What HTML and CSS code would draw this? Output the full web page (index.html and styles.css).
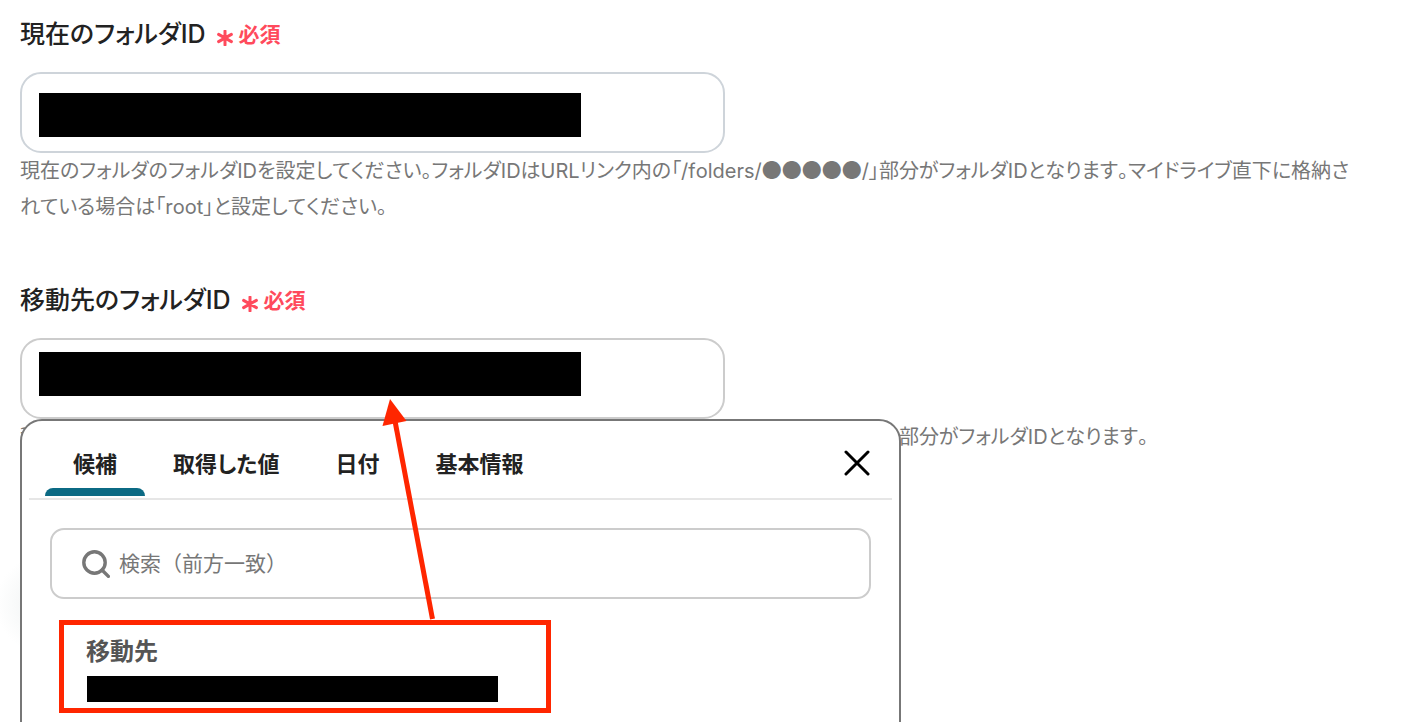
FILE: index.html
```html
<!DOCTYPE html>
<html lang="ja">
<head>
<meta charset="utf-8">
<meta name="viewport" content="width=device-width, initial-scale=1">
<title>フォルダID</title>
<link rel="stylesheet" href="styles.css">
</head>
<body>
<main class="page">
  <section class="field">
    <div class="field-head">
      <label class="field-label" for="current-folder">現在のフォルダID</label>
      <span class="required">
        <svg class="required-mark" viewBox="0 0 16 16" aria-hidden="true"><path d="M8 1v14M1.6 4.4l12.8 7.2M14.4 4.4L1.6 11.6"/></svg>
        必須
      </span>
    </div>
    <div class="control">
      <input class="text-box text-box-cool" id="current-folder" type="text">
      <span class="redaction redaction-middle"></span>
    </div>
    <p class="help">現在のフォルダのフォルダIDを設定してください。フォルダIDはURLリンク内の「/folders/<span class="dots">●●●●●</span>/」部分がフォルダIDとなります。マイドライブ直下に格納されている場合は「root」と設定してください。</p>
  </section>

  <section class="field">
    <div class="field-head">
      <label class="field-label" for="target-folder">移動先のフォルダID</label>
      <span class="required">
        <svg class="required-mark" viewBox="0 0 16 16" aria-hidden="true"><path d="M8 1v14M1.6 4.4l12.8 7.2M14.4 4.4L1.6 11.6"/></svg>
        必須
      </span>
    </div>
    <div class="control">
      <input class="text-box" id="target-folder" type="text">
      <span class="redaction redaction-upper"></span>
      <span class="glow"></span>
      <div class="panel">
        <div class="panel-head">
          <div class="tabs" role="tablist">
            <button class="tab tab-active" type="button" role="tab" aria-selected="true">候補</button>
            <button class="tab" type="button" role="tab" aria-selected="false">取得した値</button>
            <button class="tab" type="button" role="tab" aria-selected="false">日付</button>
            <button class="tab" type="button" role="tab" aria-selected="false">基本情報</button>
          </div>
          <button class="close" type="button" aria-label="閉じる">
            <svg class="close-icon" viewBox="0 0 26 26" aria-hidden="true"><path d="M2 2l22 22M24 2L2 24"/></svg>
          </button>
        </div>
        <div class="panel-body">
          <div class="search">
            <svg class="search-icon" viewBox="0 0 28 28" aria-hidden="true"><circle cx="12.5" cy="12.5" r="10.7"/><path d="M20 20l6.400 6.400"/></svg>
            <input class="search-input" type="text" aria-label="検索" placeholder="検索（前方一致）">
          </div>
          <div class="option-wrap">
            <button class="option" type="button" aria-label="移動先">
              <span class="option-title">移動先</span>
              <span class="option-value"></span>
            </button>
            <svg class="arrow" viewBox="0 0 60 221" aria-hidden="true"><path class="arrow-line" d="M51.500 220L14 22"/><path class="arrow-head" d="M9 0L25.500 22L1.500 27z"/></svg>
          </div>
        </div>
      </div>
    </div>
    <p class="help">移動先のフォルダのフォルダIDを設定してください。フォルダIDはURLリンク内の「/folders/<span class="dots">●●●●●</span>/」部分がフォルダIDとなります。</p>
  </section>
</main>
</body>
</html>
```

FILE: styles.css
```css
* { box-sizing: border-box; }

body {
  margin: 0;
  background: #fff;
  color: #222;
  font-family: Inter, "Noto Sans CJK JP", sans-serif;
}

button, input { font: inherit; color: inherit; }

.page {
  display: flex;
  flex-direction: column;
  gap: 57px;
  height: 100vh;
  padding: 16px 52px 0 20px;
  overflow: hidden;
}

.field-head {
  display: flex;
  align-items: center;
  gap: 11px;
  height: 36px;
  margin-bottom: 20px;
}

.field-label {
  font-size: 25px;
  line-height: 36px;
  font-weight: 500;
  font-kerning: none;
  font-feature-settings: "palt";
}

.required {
  display: flex;
  align-items: center;
  gap: 6px;
  padding-top: 2px;
  color: #ff4a5c;
  font-size: 21px;
  line-height: 36px;
  font-weight: 600;
}

.required-mark {
  width: 16px;
  height: 16px;
  margin-top: 5px;
  fill: none;
  stroke: currentColor;
  stroke-width: 3;
  stroke-linecap: round;
}

.control { position: relative; }

.text-box {
  display: block;
  width: 100%;
  max-width: 705px;
  height: 81px;
  padding: 0 18px;
  border: 2px solid #ccc;
  border-radius: 21px;
  background: #fff;
  outline: none;
}

.text-box-cool { border-color: #ced4da; }

.redaction {
  position: absolute;
  left: 19px;
  width: 542px;
  height: 44px;
  background: #000;
}

.redaction-middle { top: 21px; }
.redaction-upper { top: 14px; }

.help {
  margin: 0;
  color: #777;
  font-size: 20px;
  line-height: 36px;
  font-kerning: none;
  font-feature-settings: "palt";
}

.dots {
  font-family: "Noto Sans CJK JP", sans-serif;
  line-height: 1;
}

.glow {
  position: absolute;
  top: 216px;
  left: -24px;
  width: 100px;
  height: 100px;
  background: radial-gradient(closest-side, #eef1f1, #fff);
}

.panel {
  position: absolute;
  top: 81px;
  left: 0;
  z-index: 2;
  width: 881px;
  max-width: 100%;
  min-height: 400px;
  border: 2px solid #777;
  border-radius: 22px;
  background: #fff;
}

.panel-head {
  display: flex;
  align-items: center;
  justify-content: space-between;
  height: 79px;
  margin: 0 7px;
  padding: 8px 22px 2px 16px;
  border-bottom: 2px solid #e6e6e6;
}

.tabs { display: flex; align-self: stretch; }

.tab {
  position: relative;
  padding: 0 28px 2px;
  border: 0;
  background: none;
  font-size: 22px;
  font-weight: 600;
  font-feature-settings: "palt";
}

.tab-active::after {
  content: "";
  position: absolute;
  right: 0;
  bottom: 0;
  left: 0;
  height: 8px;
  border-radius: 8px 8px 0 0;
  background: #0b6a84;
}

.close {
  display: flex;
  padding: 0;
  border: 0;
  background: none;
  color: #000;
}

.close-icon {
  width: 26px;
  height: 26px;
  fill: none;
  stroke: currentColor;
  stroke-width: 3;
  stroke-linecap: round;
}

.panel-body { padding: 28px; }

.search {
  display: flex;
  align-items: center;
  gap: 9px;
  height: 71px;
  padding: 0 30px;
  border: 2px solid #ccc;
  border-radius: 14px;
  color: #777;
}

.search-icon {
  flex: none;
  width: 28px;
  height: 28px;
  fill: none;
  stroke: currentColor;
  stroke-width: 3.4;
  stroke-linecap: round;
}

.search-input {
  flex: 1;
  min-width: 0;
  padding: 0;
  border: 0;
  outline: none;
  background: none;
  font-size: 21px;
}

.search-input::placeholder { color: #777; opacity: 1; }

.option-wrap {
  position: relative;
  width: 492px;
  max-width: 100%;
  margin: 21px 0 0 9px;
}

.option {
  display: flex;
  flex-direction: column;
  gap: 6px;
  width: 100%;
  padding: 8px 22px 6px;
  border: 5px solid #ff2600;
  background: none;
  text-align: left;
}

.option-title {
  color: #555;
  font-size: 24px;
  line-height: 37px;
  font-weight: 600;
}

.option-value {
  width: 411px;
  max-width: 100%;
  height: 26px;
  margin-left: 1px;
  background: #000;
}

.arrow {
  position: absolute;
  bottom: 100%;
  left: 322px;
  width: 60px;
  height: 221px;
}

.arrow-line { fill: none; stroke: #ff2600; stroke-width: 5; }
.arrow-head { fill: #ff2600; }
```
